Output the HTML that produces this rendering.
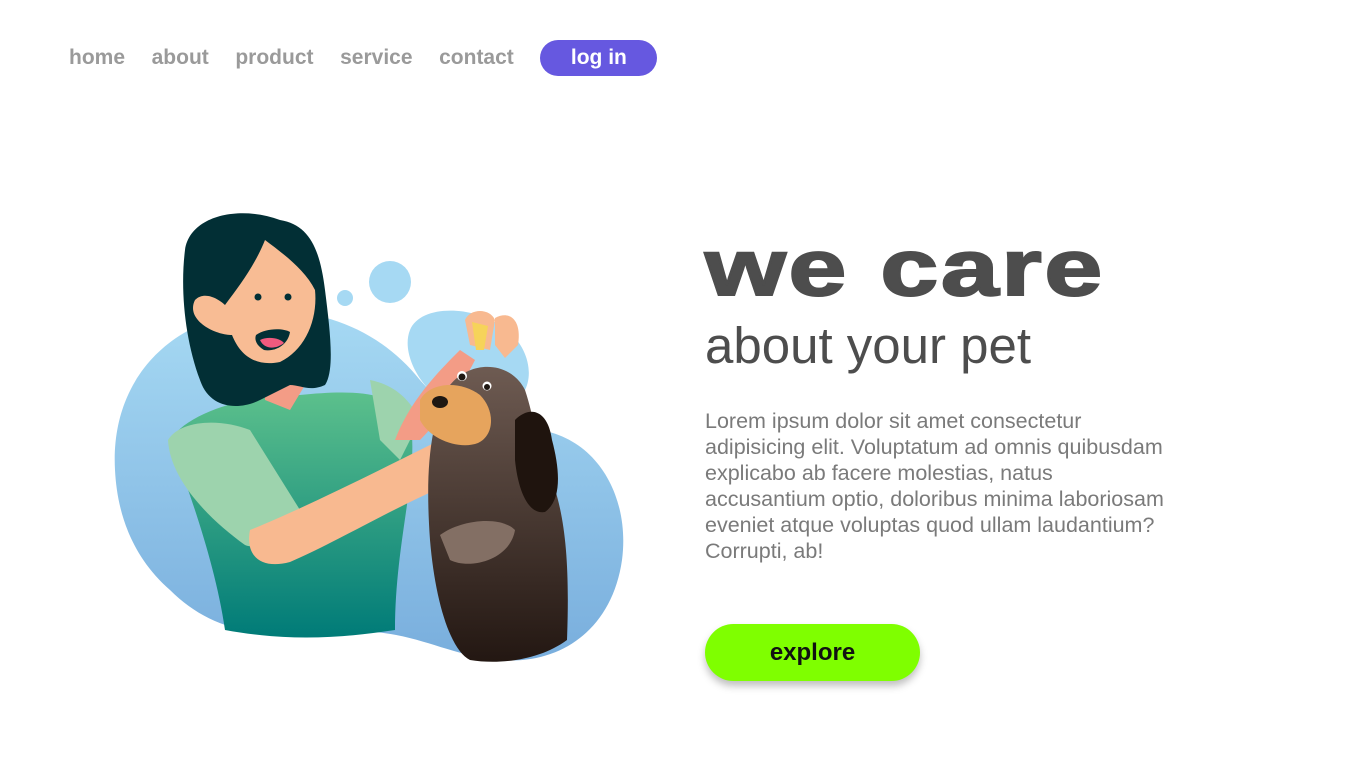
<!DOCTYPE html>
<html><head><meta charset="utf-8"><style>
body{margin:0;width:1366px;height:768px;background:#fff;font-family:"Liberation Sans",Arial,sans-serif;overflow:hidden;position:relative}
.nav{position:absolute;top:40px;left:69px;display:flex;align-items:center;height:36px}
.nav a{font-weight:bold;font-size:21px;color:#9a9a9a;margin-right:26.6px;text-decoration:none}
.nav .login{background:#6658e0;color:#fff;border-radius:18px;width:117px;height:36px;display:flex;align-items:center;justify-content:center;margin:0}
h1{position:absolute;left:705px;top:228px;margin:0;font-size:80px;font-weight:bold;color:#4d4d4d;line-height:1;letter-spacing:2px;transform:scaleX(1.3);transform-origin:0 0;white-space:nowrap;-webkit-text-stroke:2px #4d4d4d}
h2{position:absolute;left:705px;top:320px;margin:0;font-size:51px;font-weight:normal;color:#4d4d4d;line-height:1}
p{position:absolute;left:705px;top:408px;margin:0;width:472px;font-size:21.5px;line-height:26px;color:#7a7a7a}
.btn{position:absolute;left:705px;top:624px;width:215px;height:57px;border-radius:29px;background:#7fff00;box-shadow:0 5px 8px rgba(0,0,0,.25);display:flex;align-items:center;justify-content:center;font-weight:bold;font-size:24px;color:#111}
svg{position:absolute;left:0;top:0}
</style></head><body>
<div class="nav"><a>home</a><a>about</a><a>product</a><a>service</a><a>contact</a><a class="login">log in</a></div>
<svg width="700" height="700" viewBox="0 0 700 700">
<defs>
<linearGradient id="bl" x1="0" y1="0" x2="0" y2="1"><stop offset="0" stop-color="#a6d9f3"/><stop offset="1" stop-color="#79aedd"/></linearGradient>
<linearGradient id="gr" x1="0" y1="0" x2="0" y2="1"><stop offset="0" stop-color="#5cc08c"/><stop offset="1" stop-color="#007b78"/></linearGradient>
<linearGradient id="dg" x1="0" y1="0" x2="0" y2="1"><stop offset="0" stop-color="#6e5b52"/><stop offset="1" stop-color="#231712"/></linearGradient>
</defs>
<path d="M115 470 C110 380 170 320 250 312 C320 305 380 330 420 380 C455 420 480 425 540 430 C600 440 630 500 622 560 C612 630 560 665 500 660 C440 655 410 625 330 632 C260 640 210 630 170 590 C130 555 117 510 115 470Z" fill="url(#bl)"/>
<path d="M410 330 C420 305 470 305 500 325 C525 340 535 370 525 390 L440 400 C415 380 402 350 410 330Z" fill="#a6d9f3"/>
<circle cx="390" cy="282" r="21" fill="#a6d9f3"/><circle cx="345" cy="298" r="8" fill="#a6d9f3"/>
<path d="M225 630 C215 560 185 480 170 440 C190 410 250 395 300 395 C350 390 395 390 410 420 C420 470 395 540 395 630 C330 640 280 640 225 630Z" fill="url(#gr)"/>
<path d="M168 440 C180 420 220 418 250 430 L300 510 C270 540 255 550 245 545 C210 520 170 480 168 440Z" fill="#9dd3ad"/>
<path d="M370 380 C395 385 410 400 420 420 L400 460 L380 440Z" fill="#9dd3ad"/>
<path d="M250 530 C300 510 380 470 440 440 C470 430 495 440 497 460 C495 485 470 490 440 488 C390 510 330 545 290 562 C260 570 245 555 250 530Z" fill="#f8b990"/>
<path d="M395 440 C410 400 440 370 460 350 L475 360 C460 390 440 420 420 440Z" fill="#f39c86"/>
<path d="M465 320 C470 308 490 308 495 320 L490 350 L470 345Z" fill="#f8b990"/><path d="M495 318 C510 310 522 320 518 345 L505 358 L495 345Z" fill="#f8b990"/>
<path d="M472 322 L488 326 L484 350 L476 350Z" fill="#f6d35a"/>
<path d="M262 355 L300 350 L305 385 L290 410 L265 400Z" fill="#f39c86"/>
<path d="M185 250 C190 215 240 205 280 220 C310 225 320 250 325 290 C330 330 335 370 325 385 C310 392 300 385 290 385 L260 400 C240 410 210 410 200 380 C185 340 180 290 185 250Z" fill="#022f35"/>
<path d="M265 240 C285 255 305 270 315 290 C318 320 305 350 280 362 C255 367 240 355 232 335 C215 335 185 320 195 300 C205 290 220 300 225 305 C240 285 255 265 265 240Z" fill="#f8bc94"/>
<circle cx="258" cy="297" r="3.5" fill="#022f35"/><circle cx="288" cy="297" r="3.5" fill="#022f35"/>
<path d="M256 335 C266 328 283 328 290 332 C288 345 275 352 264 350 C257 346 254 340 256 335Z" fill="#022f35"/><path d="M260 340 C268 336 280 338 284 343 C275 350 264 349 260 340Z" fill="#f05a7e"/>
<path d="M430 540 C425 470 430 420 450 385 C470 360 510 360 525 390 C535 420 535 440 548 470 C565 510 570 560 567 640 C540 660 500 665 470 660 C450 650 435 600 430 540Z" fill="url(#dg)"/>
<path d="M515 420 C530 405 548 410 552 440 C560 470 562 500 545 512 C528 515 518 490 515 460Z" fill="#1f140e"/>
<path d="M440 535 C460 520 500 515 515 530 C510 560 470 570 450 560Z" fill="#836f64"/>
<path d="M420 400 C430 382 460 380 480 395 C495 410 495 435 478 443 C460 450 430 440 420 420Z" fill="#e6a45d"/>
<ellipse cx="440" cy="402" rx="8" ry="6" fill="#1e1712"/>
<circle cx="462" cy="376" r="5" fill="#fff"/><circle cx="462" cy="377" r="3.5" fill="#1e1712"/><circle cx="487" cy="386" r="4.5" fill="#fff"/><circle cx="487" cy="387" r="3" fill="#1e1712"/>
</svg>
<h1>we care</h1>
<h2>about your pet</h2>
<p>Lorem ipsum dolor sit amet consectetur adipisicing elit. Voluptatum ad omnis quibusdam explicabo ab facere molestias, natus accusantium optio, doloribus minima laboriosam eveniet atque voluptas quod ullam laudantium? Corrupti, ab!</p>
<div class="btn">explore</div>
</body></html>
